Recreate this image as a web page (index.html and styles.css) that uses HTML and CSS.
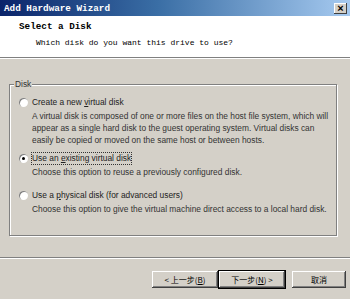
FILE: index.html
```html
<!DOCTYPE html>
<html>
<head>
<meta charset="utf-8">
<link rel="stylesheet" href="styles.css">
</head>
<body>
<div class="window">
  <div class="titlebar">
    <span class="title">Add Hardware Wizard</span>
    <span class="close">×</span>
  </div>
  <div class="header">
    <div class="h-title">Select a Disk</div>
    <div class="h-sub">Which disk do you want this drive to use?</div>
  </div>
  <div class="etch"></div>
  <div class="body">
    <div class="group">
      <div class="legend">Disk</div>
      <div class="option opt1">
        <div class="radio-row"><span class="radio"></span><span class="label">Create a new <u>v</u>irtual disk</span></div>
        <div class="desc">A virtual disk is composed of one or more files on the host file system, which will appear as a single hard disk to the guest operating system. Virtual disks can easily be copied or moved on the same host or between hosts.</div>
      </div>
      <div class="option opt2">
        <div class="radio-row"><span class="radio checked"></span><span class="label focus">Use an <u>e</u>xisting virtual disk</span></div>
        <div class="desc">Choose this option to reuse a previously configured disk.</div>
      </div>
      <div class="option opt3">
        <div class="radio-row"><span class="radio"></span><span class="label">Use a <u>p</u>hysical disk (for advanced users)</span></div>
        <div class="desc">Choose this option to give the virtual machine direct access to a local hard disk.</div>
      </div>
    </div>
  </div>
  <div class="etch foot-etch"></div>
  <div class="buttons">
    <button class="btn">&lt; 上一步(<u>B</u>)</button>
    <button class="btn default">下一步(<u>N</u>) &gt;</button>
    <button class="btn cancel">取消</button>
  </div>
</div>
</body>
</html>
```
FILE: styles.css
```css
html, body {
  margin: 0;
  padding: 0;
  background: #d4d0c8;
}
.window {
  width: 350px;
  height: 299px;
  background: #d4d0c8;
  font-family: "Liberation Sans", Arial, "Noto Sans CJK SC", sans-serif;
  font-size: 8.4px;
  color: #000;
  overflow: hidden;
}
.titlebar {
  height: 16px;
  background: linear-gradient(to right, #0a246a 0%, #3a6ea5 45%, #a6caf0 100%);
  display: flex;
  align-items: center;
  justify-content: space-between;
  padding: 0 3px 0 4px;
}
.title {
  color: #fff;
  font-family: "Liberation Mono", "Courier New", monospace;
  font-weight: bold;
  font-size: 9.3px;
}
.close {
  width: 13px;
  height: 11px;
  background: #d4d0c8;
  box-shadow: inset -1px -1px #404040, inset 1px 1px #fff;
  color: #000;
  font-size: 11px;
  line-height: 10px;
  text-align: center;
  font-weight: bold;
}
.header {
  background: #fff;
  height: 41px;
  padding: 5px 0 0 19px;
  box-sizing: border-box;
  font-family: "Liberation Mono", "Courier New", monospace;
}
.h-title {
  font-weight: bold;
  font-size: 9.3px;
  line-height: 12px;
}
.h-sub {
  font-size: 8px;
  line-height: 12px;
  padding-left: 17px;
  margin-top: 4px;
}
.etch {
  height: 0;
  border-top: 1px solid #808080;
  border-bottom: 1px solid #fff;
}
.body {
  padding: 25px 13px 0 9px;
  height: 177px;
  box-sizing: border-box;
}
.group {
  position: relative;
  border: 1px solid #808080;
  box-shadow: inset 1px 1px #fff, 1px 1px #fff;
  height: 152px;
  padding: 11px 0 0 9px;
  box-sizing: border-box;
}
.legend {
  position: absolute;
  top: -6px;
  left: 4px;
  background: #d4d0c8;
  padding: 0 1px;
  color: #333;
  line-height: 10px;
}
.opt1 { margin-bottom: 6px; }
.opt2 { margin-bottom: 11px; }
.radio-row {
  display: flex;
  align-items: center;
  gap: 4px;
  height: 12px;
}
.radio {
  width: 9px;
  height: 9px;
  border-radius: 50%;
  background: #fff;
  box-shadow: inset 1px 1px #808080;
  position: relative;
  flex: none;
}
.radio.checked::after {
  content: "";
  position: absolute;
  left: 3px;
  top: 3px;
  width: 3px;
  height: 3px;
  border-radius: 50%;
  background: #000;
}
.label {
  color: #222;
  line-height: 11px;
}
.label.focus {
  outline: 1px dotted #333;
}
.desc {
  padding-left: 13px;
  margin-top: 2px;
  line-height: 12px;
  color: #333;
}
.foot-etch {
  margin-top: 21px;
}
.buttons {
  display: flex;
  justify-content: flex-end;
  padding: 12px 4px 0 0;
}
.btn {
  font-family: "Noto Sans CJK SC", "Liberation Sans", sans-serif;
  font-size: 8px;
  height: 17px;
  padding: 0;
  background: #d4d0c8;
  border: 0;
  box-shadow: inset -1px -1px #404040, inset 1px 1px #fff, inset -2px -2px #808080;
  color: #000;
  width: 66px;
  line-height: 15px;
}
.btn.default {
  box-shadow: 0 0 0 1px #000, inset -1px -1px #404040, inset 1px 1px #fff, inset -2px -2px #808080;
  margin-left: 1px;
}
.btn.cancel {
  width: 54px;
  margin-left: 7px;
}
```
